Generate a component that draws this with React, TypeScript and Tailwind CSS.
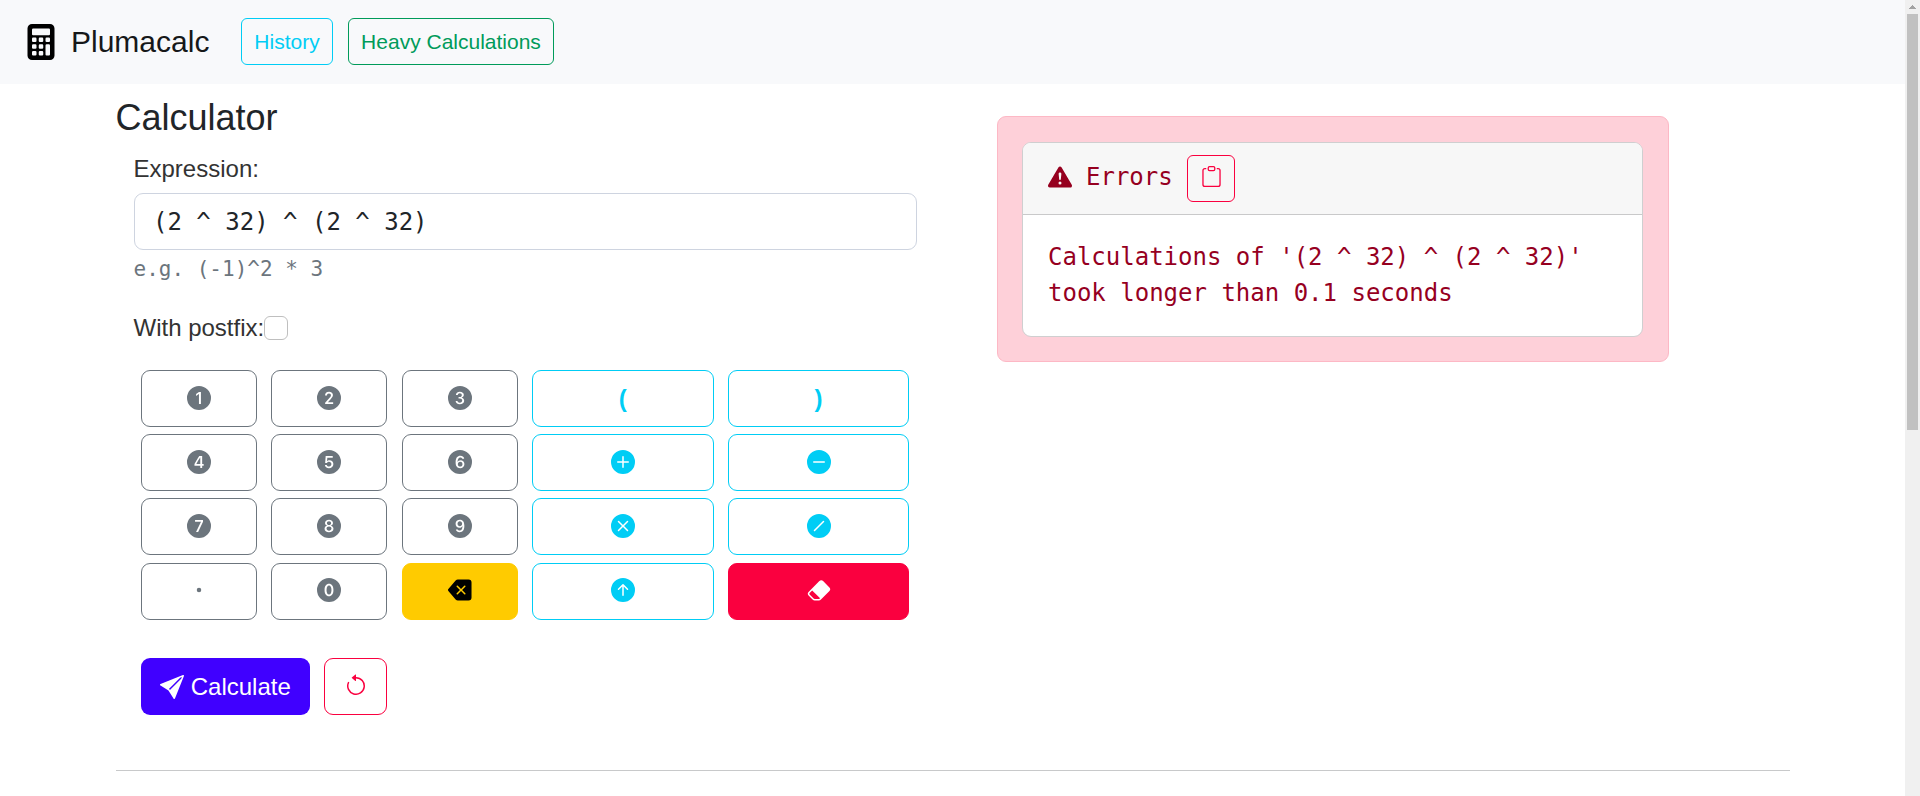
import type { ReactNode } from "react";
import {
  Bs0CircleFill,
  Bs1CircleFill,
  Bs2CircleFill,
  Bs3CircleFill,
  Bs4CircleFill,
  Bs5CircleFill,
  Bs6CircleFill,
  Bs7CircleFill,
  Bs8CircleFill,
  Bs9CircleFill,
  BsArrowCounterclockwise,
  BsArrowUpCircleFill,
  BsBackspaceFill,
  BsCalculatorFill,
  BsClipboard,
  BsDashCircleFill,
  BsDot,
  BsEraserFill,
  BsExclamationTriangleFill,
  BsPlusCircleFill,
  BsSendFill,
  BsSlashCircleFill,
  BsXCircleFill,
} from "react-icons/bs";

const tones = {
  digit: "border-[#6c757d] text-[#6c757d]",
  operator: "border-[#00cdf5] text-[#00cdf5]",
  warning: "border-[#ffcb00] bg-[#ffcb00] text-black",
  danger: "border-[#fa003f] bg-[#fa003f] text-white",
};

function Key({ tone, label, children }: { tone: keyof typeof tones; label: string; children: ReactNode }) {
  return (
    <button
      type="button"
      aria-label={label}
      className={`flex h-[57px] items-center justify-center rounded-[9px] border pb-px text-2xl ${tones[tone]}`}
    >
      {children}
    </button>
  );
}

function Keypad() {
  return (
    <div className="ml-[25px] mt-6 grid w-[768px] grid-cols-[116px_116px_116px_182px_181px] grid-rows-[57px_57px_57px_58px] items-end justify-between gap-y-[7px]">
      <Key tone="digit" label="1"><Bs1CircleFill /></Key>
      <Key tone="digit" label="2"><Bs2CircleFill /></Key>
      <Key tone="digit" label="3"><Bs3CircleFill /></Key>
      <Key tone="operator" label="Open bracket"><span className="pt-0.5 font-bold">(</span></Key>
      <Key tone="operator" label="Close bracket"><span className="pt-0.5 font-bold">)</span></Key>
      <Key tone="digit" label="4"><Bs4CircleFill /></Key>
      <Key tone="digit" label="5"><Bs5CircleFill /></Key>
      <Key tone="digit" label="6"><Bs6CircleFill /></Key>
      <Key tone="operator" label="Plus"><BsPlusCircleFill /></Key>
      <Key tone="operator" label="Minus"><BsDashCircleFill /></Key>
      <Key tone="digit" label="7"><Bs7CircleFill /></Key>
      <Key tone="digit" label="8"><Bs8CircleFill /></Key>
      <Key tone="digit" label="9"><Bs9CircleFill /></Key>
      <Key tone="operator" label="Multiply"><BsXCircleFill /></Key>
      <Key tone="operator" label="Divide"><BsSlashCircleFill /></Key>
      <Key tone="digit" label="Dot"><BsDot className="mb-0.5" /></Key>
      <Key tone="digit" label="0"><Bs0CircleFill className="mb-0.5" /></Key>
      <Key tone="warning" label="Backspace"><BsBackspaceFill className="mb-0.5" /></Key>
      <Key tone="operator" label="Power"><BsArrowUpCircleFill className="mb-0.5" /></Key>
      <Key tone="danger" label="Erase"><BsEraserFill className="mb-0.5" /></Key>
    </div>
  );
}

function Navbar() {
  return (
    <nav className="flex h-[84px] items-center bg-[#f8f9fb] pb-[1.5px] pl-[22.5px]">
      <BsCalculatorFill className="mt-[2px] size-9 text-black" />
      <span className="ml-[12.5px] w-[170px] text-[30px] leading-[45px] text-[#161819]">Plumacalc</span>
      <button type="button" className="h-[47px] w-[92px] rounded-md border border-[#00cdf5] text-[21px] text-[#00cdf5]">
        History
      </button>
      <button type="button" className="ml-[15px] h-[47px] w-[206px] rounded-md border border-[#009b5a] text-[21px] text-[#009b5a]">
        Heavy Calculations
      </button>
    </nav>
  );
}

function ErrorPanel() {
  return (
    <section className="ml-[80px] mt-8 h-[246px] w-[672px] rounded-[9px] border border-[#fdb8c5] bg-[#fed0d9] p-[25px] pl-6 font-['DejaVu_Sans_Mono',monospace] text-2xl leading-9 text-[#96001f]">
      <div className="h-[195px] overflow-hidden rounded-[9px] border border-[#cfcfd0] bg-white">
        <div className="flex h-[72px] items-center border-b border-[#c9c9ca] bg-[#f7f7f7] pl-[25px]">
          <BsExclamationTriangleFill className="mb-[3px]" />
          <span className="mb-[4px] ml-3.5">Errors</span>
          <button type="button" aria-label="Copy" className="ml-[14px] flex h-[47px] w-12 items-center justify-center rounded-md border border-[#fa003f] pb-1 pl-px text-[21px] text-[#fa003f]">
            <BsClipboard />
          </button>
        </div>
        <p className="pl-[25px] pt-[24px]">
          Calculations of '(2 ^ 32) ^ (2 ^ 32)'
          <br />
          took longer than 0.1 seconds
        </p>
      </div>
    </section>
  );
}

function Scrollbar() {
  return (
    <div className="flex w-[15px] flex-col items-center bg-[#f0f0f0]">
      <svg className="h-3.5 w-[15px]" viewBox="0 0 15 14" shapeRendering="crispEdges" fill="#a2a2a2">
        <path d="M7 5h1v1h1v1h1v1h1v1H4V8h1V7h1V6h1z" />
      </svg>
      <div className="h-[416px] w-[11px] bg-[#c1c1c1]" />
    </div>
  );
}

export default function App() {
  return (
    <div className="flex h-[796px] w-full overflow-hidden bg-white font-['Liberation_Sans',Arial,sans-serif] text-[#212529]">
      <div className="flex-1">
        <Navbar />
        <main className="ml-[116px] flex h-[686px] w-[1674px] border-b border-[#c8c9ca] box-content">
          <div className="w-[801px] shrink-0">
            <h1 className="-ml-[0.5px] mt-3 text-[36px] leading-[43px]">Calculator</h1>
            <label className="ml-[17.5px] mt-[12px] block text-2xl leading-9 text-[#333]">Expression:</label>
            <input
              readOnly
              value="(2 ^ 32) ^ (2 ^ 32)"
              className="ml-[18px] mt-1.5 block h-[57px] w-[783px] rounded-[9px] border border-[#ced4e0] bg-white px-[18px] font-['DejaVu_Sans_Mono',monospace] text-2xl outline-none"
            />
            <div className="ml-[17.5px] mt-[3px] font-['DejaVu_Sans_Mono',monospace] text-[21px] leading-8 text-[#6c757d]">
              e.g. (-1)^2 * 3
            </div>
            <div className="ml-[17.5px] mt-[25px] flex h-9 items-center text-2xl text-[#333]">
              <span>With postfix:</span>
              <span className="-ml-[0.7px] size-6 rounded-md border border-[#bfbfbf] bg-white" />
            </div>
            <Keypad />
            <div className="ml-[25px] mt-[38px] flex gap-3.5">
              <button type="button" className="flex h-[57px] w-[169px] items-center justify-center gap-[6.5px] rounded-[9px] bg-[#4000ff] text-2xl text-white">
                <BsSendFill />
                Calculate
              </button>
              <button type="button" aria-label="Reset" className="flex h-[57px] w-[63px] items-center justify-center rounded-[9px] border border-[#fa003f] pb-px text-2xl text-[#fa003f]">
                <BsArrowCounterclockwise />
              </button>
            </div>
          </div>
          <ErrorPanel />
        </main>
      </div>
      <Scrollbar />
    </div>
  );
}
